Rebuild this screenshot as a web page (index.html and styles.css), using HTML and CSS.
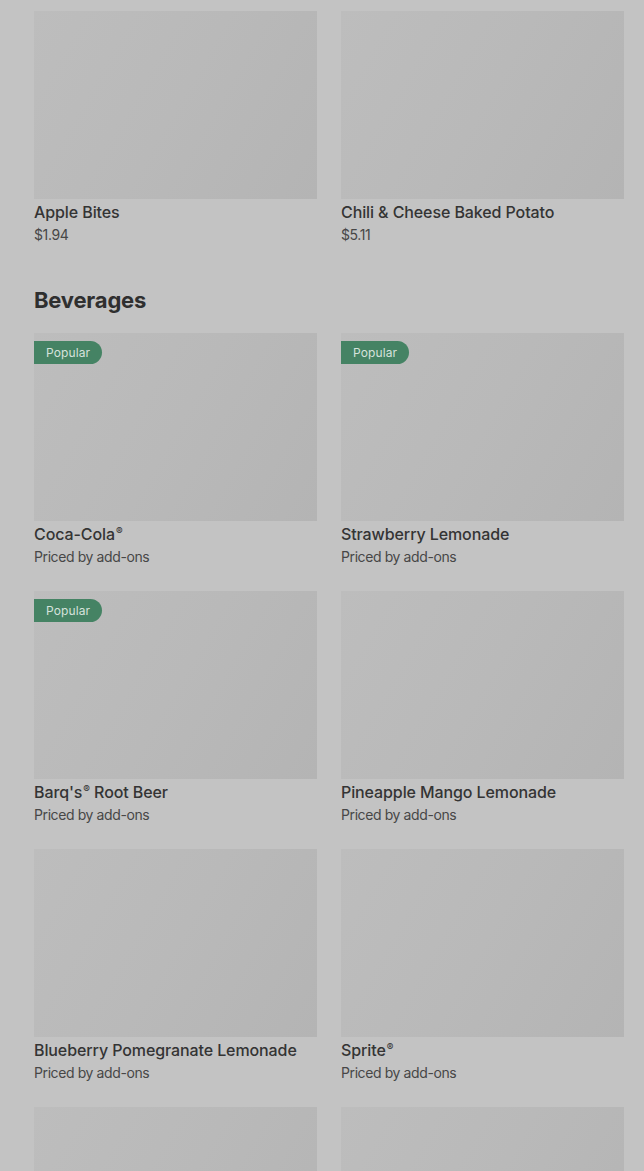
FILE: index.html
```html
<!DOCTYPE html>
<html>
<head>
<meta charset="utf-8">
<link rel="stylesheet" href="styles.css">
</head>
<body>
<div class="page">
  <div class="grid">
    <div class="card">
      <div class="thumb"></div>
      <div class="name">Apple Bites</div>
      <div class="price">$1.94</div>
    </div>
    <div class="card">
      <div class="thumb"></div>
      <div class="name">Chili &amp; Cheese Baked Potato</div>
      <div class="price">$5.11</div>
    </div>
  </div>

  <h2 class="section-title">Beverages</h2>

  <div class="grid">
    <div class="card">
      <div class="thumb"><span class="badge">Popular</span></div>
      <div class="name">Coca-Cola<span class="reg">®</span></div>
      <div class="price">Priced by add-ons</div>
    </div>
    <div class="card">
      <div class="thumb"><span class="badge">Popular</span></div>
      <div class="name">Strawberry Lemonade</div>
      <div class="price">Priced by add-ons</div>
    </div>
    <div class="card">
      <div class="thumb"><span class="badge">Popular</span></div>
      <div class="name">Barq's<span class="reg">®</span> Root Beer</div>
      <div class="price">Priced by add-ons</div>
    </div>
    <div class="card">
      <div class="thumb"></div>
      <div class="name">Pineapple Mango Lemonade</div>
      <div class="price">Priced by add-ons</div>
    </div>
    <div class="card">
      <div class="thumb"></div>
      <div class="name">Blueberry Pomegranate Lemonade</div>
      <div class="price">Priced by add-ons</div>
    </div>
    <div class="card">
      <div class="thumb"></div>
      <div class="name">Sprite<span class="reg">®</span></div>
      <div class="price">Priced by add-ons</div>
    </div>
    <div class="card">
      <div class="thumb"></div>
    </div>
    <div class="card">
      <div class="thumb"></div>
    </div>
  </div>
</div>
</body>
</html>
```

FILE: styles.css
```css
html, body {
  margin: 0;
  padding: 0;
  background: #c3c3c3;
  overflow: hidden;
}
body {
  font-family: Inter, "Noto Sans", sans-serif;
  color: #343434;
}
.page {
  padding: 11px 20px 0 34px;
}
.grid {
  display: grid;
  grid-template-columns: 283px 283px;
  column-gap: 24px;
  row-gap: 24px;
}
.card {
  display: flex;
  flex-direction: column;
}
.thumb {
  position: relative;
  height: 188px;
  background: linear-gradient(120deg, #bdbdbd 0%, #b9b9b9 50%, #b4b4b4 100%);
}
.badge {
  position: absolute;
  left: 0;
  top: 8px;
  height: 23px;
  line-height: 23px;
  padding: 0 12px 0 12px;
  background: #458364;
  color: #d6e2dc;
  font-size: 12px;
  letter-spacing: 0.1px;
  border-radius: 0 12px 12px 0;
}
.name {
  margin-top: 3px;
  font-size: 16px;
  line-height: 20px;
  font-weight: 500;
  letter-spacing: -0.1px;
  color: #343434;
}
.reg {
  font-size: 10px;
  vertical-align: 5px;
  line-height: 0;
  margin-left: 1px;
}
.price {
  margin-top: 3px;
  font-size: 14px;
  line-height: 20px;
  letter-spacing: -0.4px;
  color: #474747;
}
.section-title {
  margin: 41px 0 19px 0;
  font-size: 22px;
  line-height: 28px;
  font-weight: 700;
  letter-spacing: -0.2px;
  color: #2f2f2f;
}
```
